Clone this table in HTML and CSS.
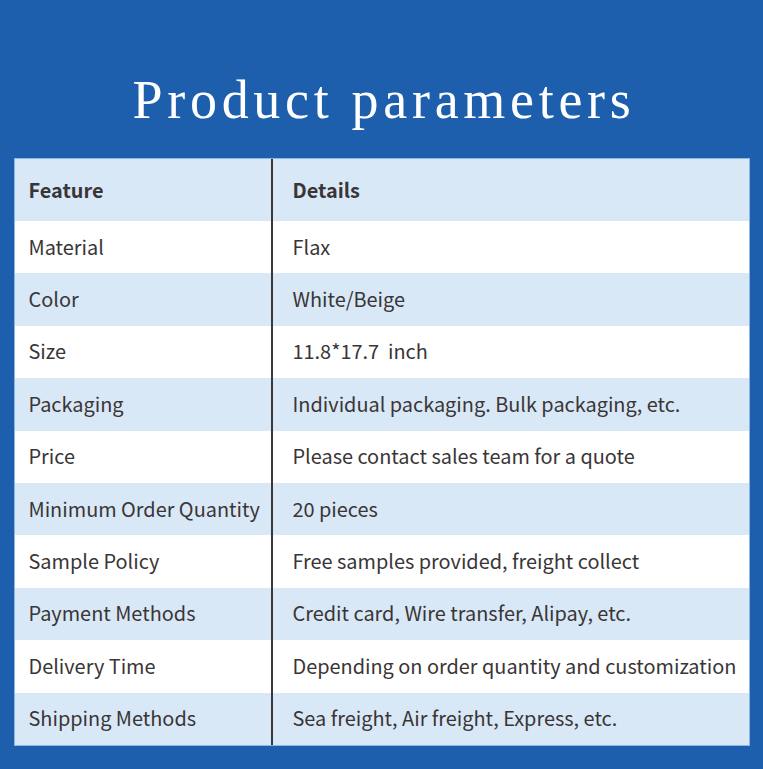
FILE: index.html
```html
<!DOCTYPE html>
<html lang="en">
<head>
<meta charset="utf-8">
<title>Product parameters</title>
<link rel="stylesheet" href="styles.css">
</head>
<body>
<main class="page">
  <h1 class="title">Product parameters</h1>
  <div class="table">
    <div class="row head"><div class="cell">Feature</div><div class="cell">Details</div></div>
    <div class="row"><div class="cell">Material</div><div class="cell">Flax</div></div>
    <div class="row alt"><div class="cell">Color</div><div class="cell">White/Beige</div></div>
    <div class="row"><div class="cell">Size</div><div class="cell">11.8*17.7&nbsp; inch</div></div>
    <div class="row alt"><div class="cell">Packaging</div><div class="cell">Individual packaging. Bulk packaging, etc.</div></div>
    <div class="row"><div class="cell">Price</div><div class="cell">Please contact sales team for a quote</div></div>
    <div class="row alt"><div class="cell">Minimum Order Quantity</div><div class="cell">20 pieces</div></div>
    <div class="row"><div class="cell">Sample Policy</div><div class="cell">Free samples provided, freight collect</div></div>
    <div class="row alt"><div class="cell">Payment Methods</div><div class="cell">Credit card, Wire transfer, Alipay, etc.</div></div>
    <div class="row"><div class="cell">Delivery Time</div><div class="cell">Depending on order quantity and customization</div></div>
    <div class="row alt"><div class="cell">Shipping Methods</div><div class="cell">Sea freight, Air freight, Express, etc.</div></div>
  </div>
</main>
</body>
</html>
```

FILE: styles.css
```css
html, body {
  margin: 0;
  padding: 0;
  background: #1d5fad;
}
.page {
  width: 763px;
  height: 769px;
  display: flex;
  flex-direction: column;
  align-items: center;
}
.title {
  margin: 0 0 0 5px;
  height: 159px;
  box-sizing: border-box;
  padding-top: 68px;
  font-family: "Liberation Serif", "Times New Roman", serif;
  font-weight: normal;
  font-size: 54px;
  line-height: 64px;
  letter-spacing: 4.7px;
  color: #ffffff;
  text-align: center;
}
.table {
  width: 734px;
  height: 586px;
  display: grid;
  grid-template-rows: 62px repeat(10, 1fr);
  font-family: "Noto Sans CJK SC", "Source Sans Pro", sans-serif;
  font-size: 19.9px;
  color: #3a3536;
  background: #ffffff;
  box-shadow: 0 0 0 1px #8db6e4;
}
.row {
  display: grid;
  grid-template-columns: 256px 1fr;
}
.row.head, .row.alt {
  background: #d8e8f6;
}
.row.head {
  font-weight: bold;
}
.cell {
  display: flex;
  align-items: center;
  padding-left: 14px;
  padding-bottom: 2px;
}
.cell + .cell {
  border-left: 2px solid #3b3839;
  padding-left: 20px;
}
```
